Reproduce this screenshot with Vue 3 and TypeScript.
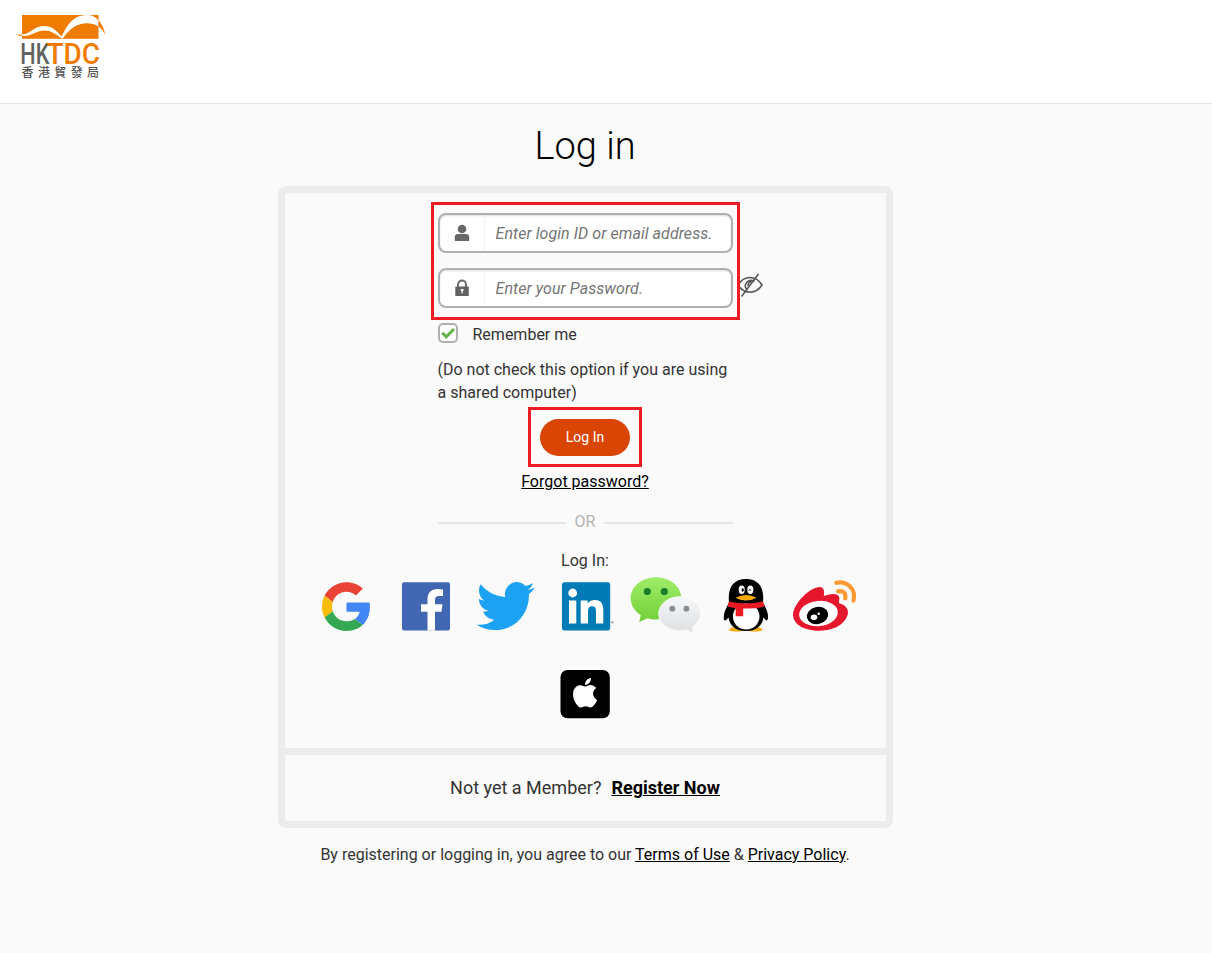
<script setup lang="ts">
import { ref } from 'vue'

const loginId = ref('')
const password = ref('')
const remember = ref(true)
</script>

<template>
  <div class="page">
    <header class="header">
      <svg class="logo" width="110" height="90" viewBox="0 0 110 90" role="img" aria-label="HKTDC">
        <rect x="22" y="15" width="76.500" height="23.800" fill="#ef7c00" />
        <path d="M22 34.500C31 34 34 26 44 26C53 26 58 32.500 61.500 36.500C65 31 70 15 87 15C92 15 96 17 98.500 20.500V26.500C94 23.800 89 23 84 23.500C73 24.500 67 33 62.500 38.800C57 35.500 52 30.500 45 30.500C36 30.500 32 36.500 22 36Z" fill="#fff" />
        <path d="M16 33.500Q19 35 22 34.600V36Q18 36 16 33.500ZM98.500 20Q103.500 26 105.300 35Q102.500 29 98.500 26.500Z" fill="#ef7c00" />
        <text class="word" y="64.300"><tspan class="grey" x="20.300" textLength="29" lengthAdjust="spacingAndGlyphs">HK</tspan><tspan class="orange" x="46.500" textLength="53.500" lengthAdjust="spacingAndGlyphs">TDC</tspan></text>
        <text class="cn" x="21.500" y="77.300" fill="#555">香港貿發局</text>
      </svg>
    </header>

    <main class="main">
      <h1>Log in</h1>
      <section class="card">
        <div class="login">
          <form class="form" @submit.prevent>
            <div class="fields">
              <label class="field">
                <span class="field-icon">
                  <svg width="16" height="18" viewBox="0 0 16 18" fill="#686868">
                    <circle cx="8" cy="5" r="4.300" />
                    <path d="M.8 17V13Q.8 10 3.800 10H12.200Q15.200 10 15.200 13V17Z" />
                  </svg>
                </span>
                <input v-model="loginId" type="text" placeholder="Enter login ID or email address." />
              </label>
              <label class="field">
                <span class="field-icon">
                  <svg width="16" height="18" viewBox="0 0 16 18">
                    <path d="M4 8V5.500a4 4 0 0 1 8 0V8" fill="none" stroke="#686868" stroke-width="1.900" />
                    <rect x="1.300" y="7.500" width="13.500" height="9.500" rx=".5" fill="#626262" />
                    <path d="M6.800 10h2.700v2h-.8v2.500h-1.200V12h-.7Z" fill="#fff" />
                  </svg>
                </span>
                <input v-model="password" type="password" placeholder="Enter your Password." />
              </label>
              <svg class="eye" width="28" height="26" viewBox="0 0 28 26" fill="none" stroke="#555" stroke-width="1.500">
                <path d="M2 13C8 3 20 3 26 13C20 22.500 8 22.500 2 13Z" />
                <path d="M18.500 9.500Q14.500 7 11 10Q7.500 14 11 18M15.500 9.500Q12 10 12 14" />
                <path d="M22.500 2 5.500 24.500" />
              </svg>
              <i class="mark mark-fields"></i>
            </div>

            <label class="remember">
              <input v-model="remember" type="checkbox" />
              <span class="box">
                <svg v-if="remember" width="16" height="16" viewBox="0 0 16 16" fill="none" stroke="#62b545" stroke-width="3">
                  <path d="M2.300 7.800 6.200 11.800 14 4" />
                </svg>
              </span>
              Remember me
            </label>
            <p class="note">(Do not check this option if you are using a shared computer)</p>
            <div class="action">
              <button type="submit">Log In</button>
              <i class="mark mark-button"></i>
            </div>
            <a class="forgot" href="#">Forgot password?</a>
            <div class="or"><span>OR</span></div>
            <p class="with">Log In:</p>
          </form>

          <div class="social">
            <a href="#" aria-label="Google">
              <svg viewBox="0 0 80 72">
                <g transform="translate(17 12.200) scale(1.020 1.015)">
                  <path fill="#ea4335" d="M24 9.500c3.540 0 6.710 1.220 9.210 3.600l6.850-6.850C35.900 2.380 30.470 0 24 0 14.620 0 6.510 5.380 2.560 13.220l7.980 6.190C12.430 13.720 17.740 9.500 24 9.500z" />
                  <path fill="#4285f4" d="M46.980 24.550c0-1.570-.15-3.090-.38-4.550H24v9.020h12.940c-.58 2.960-2.260 5.480-4.780 7.180l7.730 6c4.510-4.180 7.090-10.360 7.090-17.650z" />
                  <path fill="#fbbc05" d="M10.530 28.590c-.48-1.450-.76-2.990-.76-4.590s.27-3.140.76-4.590l-7.980-6.190C.92 16.460 0 20.120 0 24c0 3.880.92 7.540 2.560 10.780l7.970-6.190z" />
                  <path fill="#34a853" d="M24 48c6.480 0 11.930-2.130 15.890-5.810l-7.730-6c-2.150 1.450-4.920 2.300-8.160 2.300-6.260 0-11.570-4.220-13.470-9.910l-7.980 6.190C6.510 42.620 14.620 48 24 48z" />
                </g>
              </svg>
            </a>
            <a href="#" aria-label="Facebook">
              <svg viewBox="0 0 80 72">
                <rect x="17" y="12.200" width="48" height="48.300" rx="2" fill="#4267b2" />
                <path fill="#fff" d="M42.500 60.500V41.700H36V34.200H42.500V29C42.500 22.500 46.500 19 52.500 19Q55.500 19 58 19.400V26H54Q50 26 50 29.700V34.200H57.500L56.500 41.700H50V60.500Z" />
              </svg>
            </a>
            <a href="#" aria-label="Twitter">
              <svg viewBox="0 0 80 72">
                <path transform="translate(11.600 6.500) scale(2.430 2.465)" fill="#1da1f2" d="M23.953 4.570a10 10 0 01-2.825.775 4.958 4.958 0 002.163-2.723c-.951.555-2.005.959-3.127 1.184a4.920 4.920 0 00-8.384 4.482C7.690 8.095 4.067 6.130 1.640 3.162a4.822 4.822 0 00-.666 2.475c0 1.710.87 3.213 2.188 4.096a4.904 4.904 0 01-2.228-.616v.06a4.923 4.923 0 003.946 4.827 4.996 4.996 0 01-2.212.085 4.936 4.936 0 004.604 3.417 9.867 9.867 0 01-6.102 2.105c-.39 0-.779-.023-1.170-.067a13.995 13.995 0 007.557 2.209c9.053 0 13.998-7.496 13.998-13.985 0-.21 0-.42-.015-.63A9.935 9.935 0 0024 4.590z" />
              </svg>
            </a>
            <a href="#" aria-label="LinkedIn">
              <svg viewBox="0 0 80 72">
                <rect x="17" y="12.200" width="48.200" height="48.300" rx="2.500" fill="#007bb6" />
                <g fill="#fff">
                  <circle cx="27.700" cy="23" r="4.400" />
                  <path d="M24 30.500h7.300v23H24ZM35.700 30.500h7v3.200c1.200-2.200 3.600-3.800 7-3.800 7 0 8.600 4.600 8.600 10.700v12.900h-7.300V42.200c0-3-.2-6-3.800-6-3.500 0-4.200 2.700-4.200 5.700v11.600h-7.300Z" />
                </g>
                <circle cx="67.500" cy="52.300" r=".9" fill="#999" stroke="#888" stroke-width=".4" />
              </svg>
            </a>
            <a href="#" aria-label="WeChat">
              <svg viewBox="0 0 80 72">
                <defs>
                  <linearGradient id="wechat-green" x2="0" y2="1"><stop stop-color="#a0ed69" /><stop offset="1" stop-color="#72cf36" /></linearGradient>
                  <linearGradient id="wechat-grey" x2="0" y2="1"><stop stop-color="#f5f6f7" /><stop offset="1" stop-color="#dedfe1" /></linearGradient>
                </defs>
                <path fill="url(#wechat-green)" d="M31 7.300C45 7.300 56.300 16.500 56.300 28.200S45 49.400 31 49.400Q26.500 49.400 22.500 48.200L14.200 52 15.800 45.200C9.500 41 5.700 35 5.700 28.200C5.700 16.500 17 7.300 31 7.300Z" />
                <circle cx="22.300" cy="21.500" r="3.600" fill="#187d2b" /><circle cx="39.300" cy="21.500" r="3.600" fill="#187d2b" />
                <path fill="url(#wechat-grey)" stroke="#fafafa" stroke-width=".8" d="M54.700 26.700C66.300 26.700 75.500 34.300 75.500 43.700C75.500 49 72.200 53.800 67.200 57L68.500 63.200 61.500 59.800Q58.500 60.700 54.700 60.700C43 60.700 33.700 53 33.700 43.700S43 26.700 54.700 26.700Z" />
                <circle cx="47.300" cy="38.700" r="2.900" fill="#888d8f" /><circle cx="61.400" cy="38.700" r="2.900" fill="#888d8f" />
              </svg>
            </a>
            <a href="#" aria-label="QQ">
              <svg viewBox="0 0 80 72">
                <path fill="#faab07" d="M24 60.300Q24.500 57.500 30 57H52Q57 57.500 57.500 60.300Q55 61.800 47 61.600L41 60.500 34 61.600Q26 61.800 24 60.300Z" />
                <path fill="#000" d="M24 32.500C22.500 18 28 9 41 9S59.500 18 58 32.500C61 38 63.500 43 63 48Q62.500 53 58.500 47.500C57.500 55 52 61 41 61S24.500 55 23.500 47.500Q19.500 53 18.700 48.500C18.500 43 21 38 24 32.500Z" />
                <ellipse cx="41.200" cy="46.500" rx="13.300" ry="13" fill="#fff" />
                <path fill="#eb1923" d="M24 31.500Q41 35.500 58 31.500L59.800 36.500Q51 39 38.200 38.500V46.200H30.700V38.200L22.500 36.500Z" />
                <ellipse cx="36.700" cy="19.700" rx="3" ry="4.200" fill="#fff" /><ellipse cx="45.300" cy="19.700" rx="3" ry="4.200" fill="#fff" />
                <ellipse cx="37.700" cy="20" rx="1.200" ry="1.800" /><path d="M43.500 20.500q1.300-1.800 2.600 0" fill="none" stroke="#000" stroke-width="1" />
                <path d="M30.500 27.700Q41 22.500 51.700 27.700Q41 33.500 30.500 27.700Z" fill="#faab07" />
              </svg>
            </a>
            <a href="#" aria-label="Weibo">
              <svg viewBox="0 0 80 72">
                <path fill="#e6162d" d="M8 45C8 34 25 16.800 35 17Q40.500 17.800 38.800 26C46 23.300 52 23 54 26.500Q55 29 53.800 33C59 34.500 63 37.500 63 42.500C62 53 50 60.700 34.500 60.700C19 60.700 8.500 54.500 8 45Z" />
                <ellipse cx="33.500" cy="43.500" rx="19.400" ry="12.600" transform="rotate(-6 33.500 43.500)" fill="#fff" />
                <ellipse cx="32.500" cy="45.500" rx="10.800" ry="8.600" transform="rotate(-14 32.500 45.500)" />
                <ellipse cx="29" cy="47.300" rx="3.300" ry="2.800" fill="#fff" /><circle cx="33.700" cy="43.700" r="1.300" fill="#fff" />
                <path d="M51.300 12.800C62 10.500 71.500 19 68.500 30.500M53 21.300Q61.500 20 60.300 28.500" fill="none" stroke="#ff9933" stroke-width="4.200" stroke-linecap="round" />
              </svg>
            </a>
            <a href="#" aria-label="Apple">
              <svg viewBox="0 0 80 72">
                <rect x="15.500" y="12" width="49.300" height="48.300" rx="7" />
                <path transform="translate(25.300 20) scale(1.230)" fill="#fff" d="M12.152 6.896c-.948 0-2.415-1.078-3.960-1.040-2.040.027-3.910 1.183-4.961 3.014-2.117 3.675-.546 9.103 1.519 12.090 1.013 1.454 2.208 3.090 3.792 3.039 1.520-.065 2.090-.987 3.935-.987 1.831 0 2.350.987 3.960.948 1.637-.026 2.676-1.480 3.676-2.948 1.156-1.688 1.636-3.325 1.662-3.415-.039-.013-3.182-1.221-3.220-4.857-.026-3.040 2.480-4.494 2.597-4.559-1.429-2.090-3.623-2.324-4.390-2.376-2-.156-3.675 1.090-4.610 1.090zM15.530 3.830c.843-1.012 1.400-2.427 1.245-3.830-1.207.052-2.662.805-3.532 1.818-.78.896-1.454 2.338-1.273 3.714 1.338.104 2.715-.688 3.559-1.701" />
              </svg>
            </a>
          </div>
        </div>
        <div class="register">Not yet a Member?<a href="#">Register Now</a></div>
      </section>
      <p class="terms">By registering or logging in, you agree to our <a href="#">Terms of Use</a> &amp; <a href="#">Privacy Policy</a>.</p>
    </main>
  </div>
</template>

<style>
body {
  background: #fafafa;
}
</style>

<style scoped>
* {
  box-sizing: border-box;
}
.page {
  min-height: 953px;
  background: #fafafa;
  color: #333;
  font: 16px/23px Roboto, "Noto Sans CJK TC", sans-serif;
}
.header {
  height: 104px;
  background: #fff;
  border-bottom: 1px solid #e6e6e6;
}
.logo {
  display: block;
}
.word {
  font: 500 30px Roboto, sans-serif;
}
.grey {
  fill: #626260;
}
.orange {
  fill: #ef7c00;
}
.cn {
  font: 500 12px "Noto Sans CJK TC", sans-serif;
  letter-spacing: 4.4px;
}
.main {
  width: 1170px;
}
h1 {
  margin: 0;
  height: 82px;
  padding-top: 1px;
  color: #000;
  font-size: 38px;
  font-weight: 300;
  line-height: 82px;
  text-align: center;
}
p {
  margin: 0;
}
a {
  color: #000;
}
.card {
  width: 615px;
  height: 642px;
  margin: 0 auto;
  border: 7px solid #ececec;
  border-radius: 8px;
}
.login {
  height: 562px;
  border-bottom: 7px solid #ececec;
}
.form {
  display: flex;
  flex-direction: column;
  width: 295px;
  margin: 0 auto;
  padding-top: 20px;
}
.fields {
  position: relative;
  display: flex;
  flex-direction: column;
  gap: 15px;
}
.field {
  display: flex;
  height: 40px;
  overflow: hidden;
  background: #fff;
  border: 2px solid #b0b0b0;
  border-radius: 8px;
  box-shadow: inset 0 1px 2px #ddd;
}
.field-icon {
  display: grid;
  flex: none;
  width: 45px;
  place-items: center;
  border-right: 1px solid #f3f3f3;
}
.field input {
  flex: 1;
  min-width: 0;
  padding: 0 6px 0 11px;
  border: 0;
  outline: 0;
  background: transparent;
  font: 16px Roboto, sans-serif;
}
.field input::placeholder {
  color: #757575;
  font-style: italic;
  letter-spacing: 0.06px;
}
.eye {
  position: absolute;
  top: 59px;
  left: 298.5px;
}
.mark {
  position: absolute;
  border: 3px solid #ed1c24;
  pointer-events: none;
}
.mark-fields {
  inset: -11px -7px -12px;
}
.mark-button {
  inset: -12px -12px -11px;
}
.remember {
  display: flex;
  align-items: center;
  height: 23px;
  margin-top: 15px;
}
.remember input {
  display: none;
}
.box {
  display: grid;
  width: 20px;
  height: 20px;
  margin: -3px 15px 0 0;
  place-items: center;
  background: #fff;
  border: 2px solid #b0b0b0;
  border-radius: 5px;
}
.note {
  margin-top: 12px;
}
.action {
  position: relative;
  align-self: center;
  width: 90px;
  height: 37px;
  margin-top: 15px;
}
button {
  width: 90px;
  height: 37px;
  padding: 0 0 1px;
  color: #fff;
  background: #da4503;
  border: 0;
  border-radius: 19px;
  font: 14px Roboto, sans-serif;
}
.forgot {
  align-self: center;
  margin-top: 14px;
}
.or {
  display: flex;
  gap: 9px;
  align-items: center;
  margin-top: 17px;
  color: #b3b3b3;
}
.or::before,
.or::after {
  flex: 1;
  height: 2px;
  margin-top: 2px;
  background: #e6e6e6;
  content: "";
}
.with {
  margin-top: 16px;
  text-align: center;
}
.social {
  display: flex;
  flex-wrap: wrap;
  justify-content: center;
  width: 560px;
  margin: -2px auto 0;
}
.social a {
  width: 80px;
  height: 88px;
}
.social svg {
  display: block;
  width: 80px;
  height: 72px;
}
.register {
  display: flex;
  gap: 10px;
  align-items: center;
  justify-content: center;
  height: 66px;
  padding-bottom: 1px;
  font-size: 18px;
}
.register a {
  font-weight: 700;
}
.terms {
  margin-top: 15px;
  text-align: center;
}
</style>
